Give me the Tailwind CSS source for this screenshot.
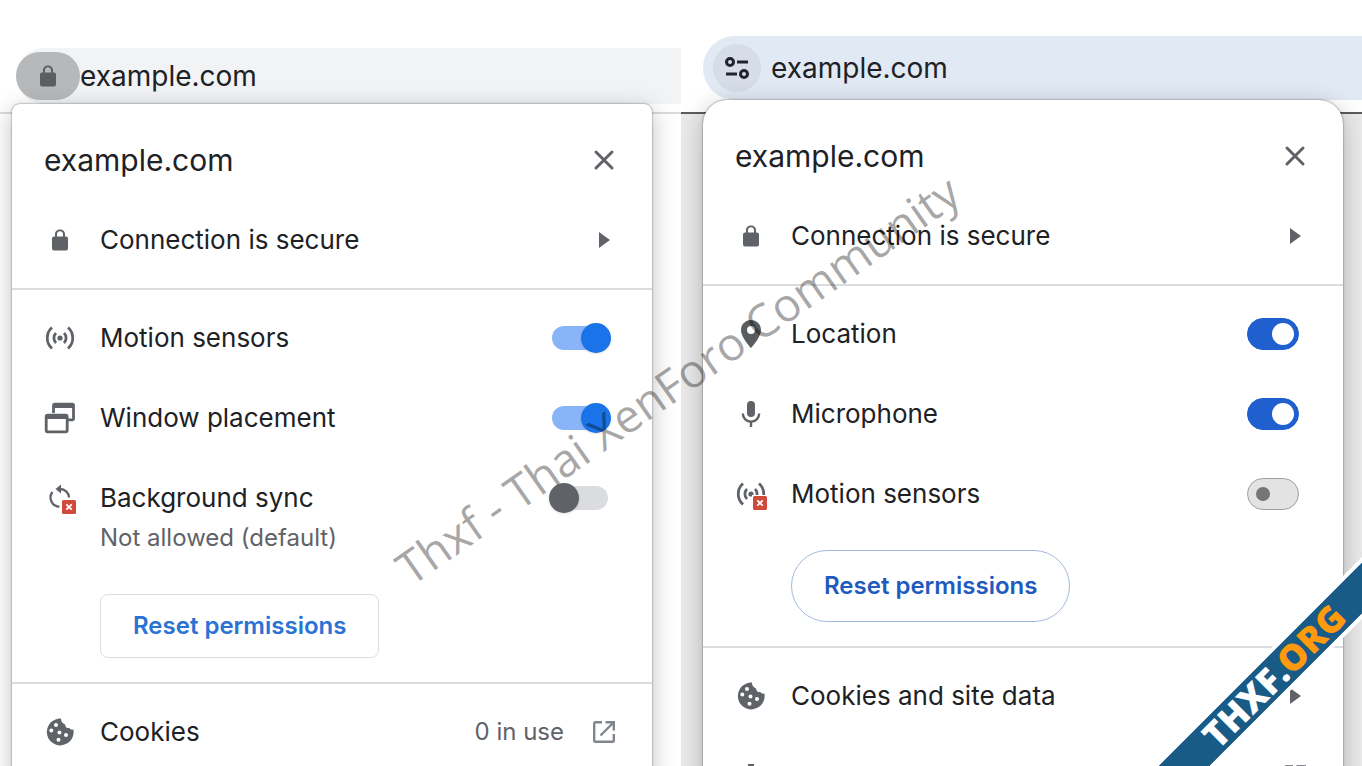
<!DOCTYPE html>
<html lang="en">
<head>
  <meta charset="UTF-8" />
  <meta name="viewport" content="width=device-width, initial-scale=1">
  <title>Site controls - example.com</title>
  <script src="https://cdn.jsdelivr.net/npm/@tailwindcss/browser@4"></script>
</head>
<body class="bg-white">
  <!-- Shared icons -->
  <svg class="hidden" xmlns="http://www.w3.org/2000/svg">
    <symbol id="lock" viewBox="0 0 24 24">
      <path fill="currentColor" d="M18 8.5h-1V6.2C17 3.4 14.800 1.500 12 1.500S7 3.400 7 6.200v2.300H6a2 2 0 0 0-2 2v10a2 2 0 0 0 2 2h12a2 2 0 0 0 2-2v-10a2 2 0 0 0-2-2zM9 8.500V6.200c0-1.700 1.300-2.900 3-2.900s3 1.200 3 2.900v2.300z" />
    </symbol>
    <symbol id="close" viewBox="0 0 24 24">
      <path fill="none" stroke="currentColor" stroke-width="3" stroke-linecap="round" d="M4 4l16 16M20 4L4 20" />
    </symbol>
    <symbol id="arrow" viewBox="0 0 24 24">
      <path fill="currentColor" d="M7 4l11 8-11 8z" />
    </symbol>
    <symbol id="motion" viewBox="0 0 32 32">
      <circle cx="16" cy="16" r="2.600" fill="currentColor" />
      <path fill="none" stroke="currentColor" stroke-width="2.800" d="M12 11a7 7 0 0 0 0 10M20 11a7 7 0 0 1 0 10M8 5.500a14 14 0 0 0 0 21M24 5.500a14 14 0 0 1 0 21" />
    </symbol>
    <symbol id="blocked" viewBox="0 0 14 14">
      <rect width="14" height="14" rx="1.500" fill="#d04a3c" />
      <path stroke="#fff" stroke-width="1.800" d="M4.300 4.300l5.400 5.400M9.700 4.300L4.300 9.700" />
    </symbol>
    <symbol id="cookie" viewBox="0 0 32 32">
      <path fill="currentColor" d="M17 2.600A13.400 13.400 0 1 0 29.400 13.500c-1.600.4-3.200-.1-4-1.500-2.300.5-4.500-1.300-4.300-3.600-2.500-.5-4.200-3-4.100-5.800z" />
      <g fill="#fff">
        <circle cx="12" cy="9" r="2" /><circle cx="7.300" cy="14.500" r="2" /><circle cx="15.500" cy="16.500" r="2" /><circle cx="22" cy="19" r="2" /><circle cx="14.500" cy="23.800" r="2" />
      </g>
    </symbol>
    <symbol id="open" viewBox="0 0 24 24">
      <path fill="none" stroke="currentColor" stroke-width="2.400" d="M10 2.200H3.500a1.300 1.300 0 0 0-1.300 1.300v17a1.300 1.300 0 0 0 1.300 1.300h17a1.300 1.300 0 0 0 1.300-1.300V14M13.500 2.200h8.300v8.300M21.500 2.500L8.500 15.500" />
    </symbol>
  </svg>

  <main class="relative grid h-screen grid-cols-2 overflow-hidden font-['Inter','Liberation_Sans',sans-serif] text-[26px] leading-8 text-[#202124]">

    <!-- Old page info bubble -->
    <section class="relative overflow-hidden">
      <div class="border-b-2 border-[#dcdcdc] pt-12 pb-2 pl-4">
        <div class="flex h-14 items-center rounded-l-full bg-[#f1f3f4]">
          <button type="button" aria-label="View site information" class="flex h-12 w-16 items-center justify-center rounded-full bg-[#b6b8ba] text-[#5c5e60]">
            <svg class="size-6"><use href="#lock" /></svg>
          </button>
          <span class="text-[28px]">example.com</span>
        </div>
      </div>

      <div role="dialog" aria-label="example.com" class="absolute top-26 right-[29px] left-3 rounded-t-lg bg-white shadow-[0_0_2px_rgba(0,0,0,0.6),0_6px_24px_rgba(0,0,0,0.25)]">
        <header class="flex h-24 items-center justify-between px-8 pt-4">
          <h1 class="text-3xl">example.com</h1>
          <button type="button" aria-label="Close" class="flex w-8 justify-center text-[#5f6368]"><svg class="size-6"><use href="#close" /></svg></button>
        </header>
        <div class="border-b-2 border-[#dadce0] pb-2">
          <a href="#" class="flex h-20 items-center gap-6 px-8">
            <span class="flex w-8 justify-center text-[#5f6368]"><svg class="size-6"><use href="#lock" /></svg></span>
            <span class="grow">Connection is secure</span>
            <span class="flex w-8 justify-center text-[#5f6368]"><svg class="size-6"><use href="#arrow" /></svg></span>
          </a>
        </div>

        <div class="border-b-2 border-[#dadce0] pt-2 pb-6">
          <div class="flex h-20 items-center gap-6 px-8">
            <svg class="size-8 text-[#5f6368]"><use href="#motion" /></svg>
            <label for="old-motion" class="grow">Motion sensors</label>
            <input id="old-motion" type="checkbox" checked class="relative mr-3 h-6 w-14 appearance-none rounded-full bg-[#dadce0] before:absolute before:-top-[3px] before:-left-[3px] before:size-[30px] before:rounded-full before:bg-[#5f6368] before:shadow-sm checked:bg-[#8ab4f8] checked:before:left-[29px] checked:before:bg-[#1a73e8]">
          </div>
          <div class="flex h-20 items-center gap-6 px-8">
            <svg class="size-8 text-[#5f6368]" viewBox="0 0 32 32" fill="none" stroke="currentColor">
              <path stroke-width="2.800" d="M9.500 11V3.500A1.300 1.300 0 0 1 10.800 2.200h17.400A1.300 1.300 0 0 1 29.500 3.500v13a1.300 1.300 0 0 1-1.300 1.300H24" />
              <path stroke-width="4" d="M9 4h21M3 15h20" />
              <rect x="2.200" y="13.200" width="21" height="16.600" rx="1.500" stroke-width="2.800" />
            </svg>
            <label for="old-window" class="grow">Window placement</label>
            <input id="old-window" type="checkbox" checked class="relative mr-3 h-6 w-14 appearance-none rounded-full bg-[#dadce0] before:absolute before:-top-[3px] before:-left-[3px] before:size-[30px] before:rounded-full before:bg-[#5f6368] before:shadow-sm checked:bg-[#8ab4f8] checked:before:left-[29px] checked:before:bg-[#1a73e8]">
          </div>
          <div class="flex h-20 items-center gap-6 px-8">
            <svg class="size-8 text-[#5f6368]" viewBox="0 0 32 32">
              <path fill="none" stroke="currentColor" stroke-width="2.300" d="M8.500 10a9 9 0 0 0 7 14.600M16 7a9 9 0 0 1 9 8.500" />
              <path fill="currentColor" d="M17 2.500v9L11.500 7z" />
              <use href="#blocked" x="18" y="18" width="14" height="14" />
            </svg>
            <label for="old-sync" class="grow">Background sync</label>
            <input id="old-sync" type="checkbox" class="relative mr-3 h-6 w-14 appearance-none rounded-full bg-[#dadce0] before:absolute before:-top-[3px] before:-left-[3px] before:size-[30px] before:rounded-full before:bg-[#5f6368] before:shadow-sm checked:bg-[#8ab4f8] checked:before:left-[29px] checked:before:bg-[#1a73e8]">
          </div>
          <div class="-mt-4 pl-22">
            <p class="text-2xl text-[#5f6368]">Not allowed (default)</p>
            <button type="button" class="mt-10 h-16 rounded-lg border border-[#dadce0] px-8 text-2xl font-semibold text-[#2a72d4]">Reset permissions</button>
          </div>
        </div>

        <a href="#" class="flex h-24 items-center gap-6 px-8">
          <svg class="size-8 text-[#5f6368]"><use href="#cookie" /></svg>
          <span class="grow">Cookies</span>
          <span class="text-2xl text-[#5f6368]">0 in use</span>
          <span class="flex w-8 justify-center text-[#80868b]"><svg class="size-6"><use href="#open" /></svg></span>
        </a>
      </div>
    </section>

    <!-- New page info bubble -->
    <section class="relative overflow-hidden bg-[#eaeaea]">
      <div class="border-b-2 border-[#5c5c5c] bg-white pt-9 pb-3 pl-[22px]">
        <div class="flex h-16 items-center gap-[10px] rounded-l-full bg-[#e1e9f5] pl-[10px]">
          <button type="button" aria-label="View site information" class="flex size-12 items-center justify-center rounded-full bg-[#d6dde9]">
            <svg class="size-6" viewBox="0 0 24 24" fill="none" stroke="#1f2430" stroke-width="3">
              <circle cx="5" cy="6" r="3.500" /><path d="M12 6h11M1 18h11" /><circle cx="19" cy="18" r="3.500" />
            </svg>
          </button>
          <span class="text-[28px]">example.com</span>
        </div>
      </div>

      <div role="dialog" aria-label="example.com" class="absolute top-25 right-[19px] left-[22px] rounded-t-3xl bg-white shadow-[0_0_2px_rgba(0,0,0,0.6),0_6px_24px_rgba(0,0,0,0.25)]">
        <header class="flex h-24 items-center justify-between px-8 pt-4">
          <h1 class="text-3xl">example.com</h1>
          <button type="button" aria-label="Close" class="flex w-8 justify-center text-[#5f6368]"><svg class="size-6"><use href="#close" /></svg></button>
        </header>
        <div class="border-b-2 border-[#dadce0] pb-2">
          <a href="#" class="flex h-20 items-center gap-6 px-8">
            <span class="flex w-8 justify-center text-[#5f6368]"><svg class="size-6"><use href="#lock" /></svg></span>
            <span class="grow">Connection is secure</span>
            <span class="flex w-8 justify-center text-[#5f6368]"><svg class="size-6"><use href="#arrow" /></svg></span>
          </a>
        </div>

        <div class="border-b-2 border-[#dadce0] pt-2 pb-6">
          <div class="flex h-20 items-center gap-6 px-8">
            <svg class="size-8 text-[#5a5d60]" viewBox="0 0 32 32">
              <path fill="currentColor" fill-rule="evenodd" d="M16 2C10.400 2 6 6.400 6 12c0 7.500 10 18 10 18s10-10.500 10-18c0-5.600-4.400-10-10-10zm0 6a4 4 0 1 1 0 8 4 4 0 0 1 0-8z" />
            </svg>
            <label for="new-location" class="grow">Location</label>
            <input id="new-location" type="checkbox" checked class="relative mr-3 h-8 w-[52px] appearance-none rounded-full border border-[#a0a0a0] bg-[#e3e3e3] before:absolute before:top-2 before:left-2 before:size-[14px] before:rounded-full before:bg-[#757575] checked:border-[#1f5fce] checked:bg-[#1f5fce] checked:before:top-1 checked:before:left-6 checked:before:size-[22px] checked:before:bg-white">
          </div>
          <div class="flex h-20 items-center gap-6 px-8">
            <svg class="size-8 text-[#5f6368]" viewBox="0 0 32 32" fill="none" stroke="currentColor">
              <rect x="12" y="3" width="8" height="16" rx="4" fill="currentColor" stroke="none" />
              <path stroke-width="2.400" d="M7.800 15.500a8.200 8.200 0 0 0 16.400 0M16 23.500V29" />
            </svg>
            <label for="new-mic" class="grow">Microphone</label>
            <input id="new-mic" type="checkbox" checked class="relative mr-3 h-8 w-[52px] appearance-none rounded-full border border-[#a0a0a0] bg-[#e3e3e3] before:absolute before:top-2 before:left-2 before:size-[14px] before:rounded-full before:bg-[#757575] checked:border-[#1f5fce] checked:bg-[#1f5fce] checked:before:top-1 checked:before:left-6 checked:before:size-[22px] checked:before:bg-white">
          </div>
          <div class="flex h-20 items-center gap-6 px-8">
            <svg class="size-8 text-[#5f6368]" viewBox="0 0 32 32">
              <use href="#motion" width="32" height="32" />
              <path fill="#fff" d="M17 17h15v15H17z" />
              <use href="#blocked" x="18" y="18" width="14" height="14" />
            </svg>
            <label for="new-motion" class="grow">Motion sensors</label>
            <input id="new-motion" type="checkbox" class="relative mr-3 h-8 w-[52px] appearance-none rounded-full border border-[#a0a0a0] bg-[#e3e3e3] before:absolute before:top-2 before:left-2 before:size-[14px] before:rounded-full before:bg-[#757575] checked:border-[#1f5fce] checked:bg-[#1f5fce] checked:before:top-1 checked:before:left-6 checked:before:size-[22px] checked:before:bg-white">
          </div>
          <div class="pt-4 pl-22">
            <button type="button" class="h-18 rounded-full border border-[#a3b9de] px-8 text-2xl font-semibold text-[#1f5bbf]">Reset permissions</button>
          </div>
        </div>

        <div class="pt-2">
          <a href="#" class="flex h-20 items-center gap-6 px-8">
            <svg class="size-8 text-[#5f6368]"><use href="#cookie" /></svg>
            <span class="grow">Cookies and site data</span>
            <span class="flex w-8 justify-center text-[#5f6368]"><svg class="size-6"><use href="#arrow" /></svg></span>
          </a>
          <a href="#" aria-label="Site settings" class="flex h-20 items-center justify-between px-8">
            <svg class="size-8 text-[#5f6368]" viewBox="0 0 32 32" fill="none" stroke="currentColor">
              <circle cx="16" cy="16" r="7" stroke-width="4" />
              <path stroke-width="6" d="M16 4v5M16 23v5M5.600 10l4.300 2.500M22.100 19.500l4.300 2.500M5.600 22l4.300-2.500M22.100 12.500l4.300-2.500" />
            </svg>
            <span class="flex w-8 justify-center text-[#80868b]"><svg class="size-6"><use href="#open" /></svg></span>
          </a>
        </div>
      </div>
    </section>

    <!-- Watermark -->
    <div class="pointer-events-none absolute inset-0 flex items-center justify-center pr-2 pb-2">
      <p class="-rotate-35 font-['Open_Sans','Noto_Sans',sans-serif] text-[46px] whitespace-nowrap text-black/35">Thxf - Thai XenForo Community</p>
    </div>

    <!-- Corner ribbon -->
    <div class="absolute -right-26 bottom-17 flex w-96 -rotate-45 justify-center border-y-4 border-white bg-[#195b87] bg-clip-padding font-['Open_Sans','Noto_Sans',sans-serif] text-4xl leading-9 font-extrabold text-white">
      THXF.<span class="text-[#ff9a0c]">ORG</span>
    </div>
  </main>
</body>
</html>
